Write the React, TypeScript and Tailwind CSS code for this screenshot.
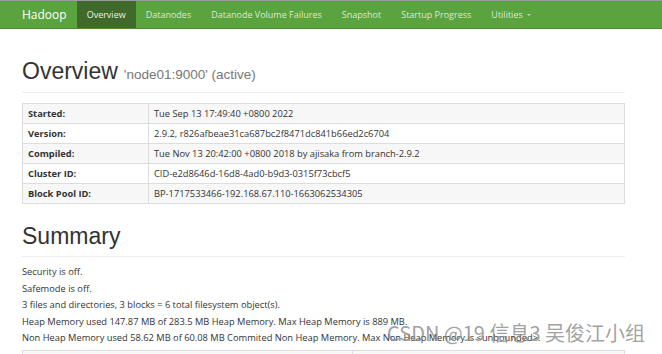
import React from "react";

const navItems = ["Datanodes", "Datanode Volume Failures", "Snapshot", "Startup Progress"];

const overviewRows: [string, string][] = [
  ["Started:", "Tue Sep 13 17:49:40 +0800 2022"],
  ["Version:", "2.9.2, r826afbeae31ca687bc2f8471dc841b66ed2c6704"],
  ["Compiled:", "Tue Nov 13 20:42:00 +0800 2018 by ajisaka from branch-2.9.2"],
  ["Cluster ID:", "CID-e2d8646d-16d8-4ad0-b9d3-0315f73cbcf5"],
  ["Block Pool ID:", "BP-1717533466-192.168.67.110-1663062534305"],
];

const summaryLines = [
  "Security is off.",
  "Safemode is off.",
  "3 files and directories, 3 blocks = 6 total filesystem object(s).",
  "Heap Memory used 147.87 MB of 283.5 MB Heap Memory. Max Heap Memory is 889 MB.",
  "Non Heap Memory used 58.62 MB of 60.08 MB Commited Non Heap Memory. Max Non Heap Memory is <unbounded>.",
];

function Navbar() {
  return (
    <nav className="flex h-[29px] items-stretch border-t border-t-[#9a9a9a] border-b border-b-[#4c8a33] bg-[#5ba33f] pl-[22px] font-['Open_Sans',sans-serif] text-[9px]">
      <span className="mr-[10px] flex items-center text-[12px] text-white">Hadoop</span>
      <span className="flex items-center bg-[#3f6a2c] px-[10px] text-[#e8f2e0]">Overview</span>
      {navItems.map((item) => (
        <span key={item} className="flex items-center px-[10px] text-[#d9ecce]">
          {item}
        </span>
      ))}
      <span className="flex items-center gap-[4px] px-[10px] text-[#d9ecce]">
        Utilities
        <span className="mt-[1px] border-x-[2.5px] border-t-[2.5px] border-x-transparent border-t-[#b8d8a8]" />
      </span>
    </nav>
  );
}

function Heading({ title, sub, pb }: { title: string; sub?: string; pb: string }) {
  return (
    <div className={`border-b border-[#eeeeee] ${pb}`}>
      <h1 className="font-['Liberation_Sans',sans-serif] text-[23px] leading-[26px] text-[#333333]">
        {title}
        {sub ? <small className="ml-[6px] text-[13.5px] text-[#777777]">{sub}</small> : null}
      </h1>
    </div>
  );
}

export default function App() {
  return (
    <div className="relative h-[354px] w-[662px] overflow-hidden bg-white text-[#333333]">
      <Navbar />
      <div className="w-[625px] pl-[22px] font-['Open_Sans',sans-serif] text-[9.3px]">
        <div className="pt-[29px]">
          <Heading title="Overview" sub="'node01:9000' (active)" pb="pb-[4px]" />
        </div>
        <table className="mt-[10px] w-full border-collapse border border-[#dddddd]">
          <tbody>
            {overviewRows.map(([k, v], i) => (
              <tr key={k} className={i % 2 === 0 ? "bg-[#f7f7f7]" : "bg-white"}>
                <th className="h-[20px] w-[126px] border border-[#dddddd] px-[5px] text-left font-bold">{k}</th>
                <td className="h-[20px] border border-[#dddddd] px-[5px]">{v}</td>
              </tr>
            ))}
          </tbody>
        </table>
        <div className="pt-[19px]">
          <Heading title="Summary" pb="pb-[7px]" />
        </div>
        <div className="mt-[7px] flex flex-col">
          {summaryLines.map((line) => (
            <p key={line} className="leading-[16.5px]">
              {line}
            </p>
          ))}
        </div>
        <table className="mt-[3px] w-full border-collapse border border-[#dddddd]">
          <tbody>
            <tr className="bg-[#f7f7f7]">
              <th className="h-[20px] w-[330px] border border-[#dddddd]" />
              <td className="h-[20px] border border-[#dddddd]" />
            </tr>
          </tbody>
        </table>
      </div>
      <span className="absolute left-[387px] top-[320px] font-['Noto_Sans_CJK_SC',sans-serif] text-[20px] leading-[26px] text-[#888888]/80">
        CSDN @19 信息3 吴俊江小组
      </span>
    </div>
  );
}
